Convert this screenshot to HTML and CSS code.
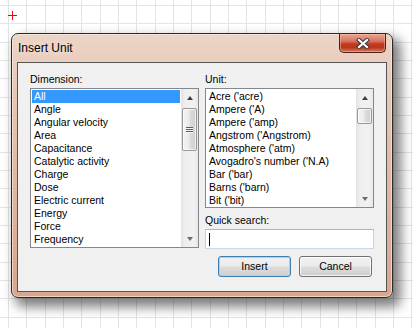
FILE: index.html
```html
<!DOCTYPE html>
<html>
<head>
<meta charset="utf-8">
<link rel="stylesheet" href="styles.css">
</head>
<body>
<div class="canvas">
  <div class="cross"></div>
  <div class="dialog">
    <div class="titlebar">
      <span class="title">Insert Unit</span>
      <div class="close">
        <svg width="14" height="11" viewBox="0 0 14 11">
          <path d="M3 2 L11 9 M11 2 L3 9" stroke="#3a3a3a" stroke-width="4.2" stroke-linecap="square" fill="none"/>
          <path d="M3 2 L11 9 M11 2 L3 9" stroke="#ffffff" stroke-width="2.2" stroke-linecap="square" fill="none"/>
        </svg>
      </div>
    </div>
    <div class="client">
      <div class="col">
        <div class="label">Dimension:</div>
        <div class="listbox tall">
          <div class="items">
            <div class="item sel">All</div>
            <div class="item">Angle</div>
            <div class="item">Angular velocity</div>
            <div class="item">Area</div>
            <div class="item">Capacitance</div>
            <div class="item">Catalytic activity</div>
            <div class="item">Charge</div>
            <div class="item">Dose</div>
            <div class="item">Electric current</div>
            <div class="item">Energy</div>
            <div class="item">Force</div>
            <div class="item">Frequency</div>
          </div>
          <div class="scrollbar">
            <div class="arrow"><span class="tri up"></span></div>
            <div class="track">
              <div class="thumb big"><span class="grip"></span><span class="grip"></span><span class="grip"></span></div>
            </div>
            <div class="arrow"><span class="tri down"></span></div>
          </div>
        </div>
      </div>
      <div class="col">
        <div class="label">Unit:</div>
        <div class="listbox short">
          <div class="items">
            <div class="item">Acre ('acre)</div>
            <div class="item">Ampere ('A)</div>
            <div class="item">Ampere ('amp)</div>
            <div class="item">Angstrom ('Angstrom)</div>
            <div class="item">Atmosphere ('atm)</div>
            <div class="item">Avogadro's number ('N.A)</div>
            <div class="item">Bar ('bar)</div>
            <div class="item">Barns ('barn)</div>
            <div class="item">Bit ('bit)</div>
          </div>
          <div class="scrollbar">
            <div class="arrow"><span class="tri up"></span></div>
            <div class="track">
              <div class="thumb small"></div>
            </div>
            <div class="arrow"><span class="tri down"></span></div>
          </div>
        </div>
        <div class="label search-label">Quick search:</div>
        <div class="textbox"><span class="caret"></span></div>
        <div class="buttons">
          <div class="btn default">Insert</div>
          <div class="btn">Cancel</div>
        </div>
      </div>
    </div>
  </div>
</div>
</body>
</html>
```

FILE: styles.css
```css
* { box-sizing: border-box; }
html, body { margin: 0; padding: 0; }
body {
  width: 413px;
  height: 328px;
  overflow: hidden;
  background-color: #ffffff;
  background-image:
    repeating-linear-gradient(to right, #e4e4e4 0, #e4e4e4 1px, transparent 1px, transparent 18.33px),
    repeating-linear-gradient(to bottom, #e4e4e4 0, #e4e4e4 1px, transparent 1px, transparent 18.33px);
  background-position: 8px 0, 0 5px;
  font-family: "Liberation Sans", Arial, sans-serif;
  font-size: 10.5px;
  color: #000;
}
.canvas {
  position: relative;
  width: 413px;
  height: 328px;
  padding: 33px 0 0 11px;
}
.cross {
  position: absolute;
  left: 8px;
  top: 11px;
  width: 9px;
  height: 9px;
  background:
    linear-gradient(#ff0000, #ff0000) 0 4px / 9px 1px no-repeat,
    linear-gradient(#ff0000, #ff0000) 4px 0 / 1px 9px no-repeat;
}
.dialog {
  width: 382px;
  height: 265px;
  border: 1px solid #2a2a2a;
  border-radius: 7px;
  padding: 0 5px 5px 5px;
  background: linear-gradient(to bottom, #ecd4c6 0%, #e5c3b0 30%, #dcb09a 75%, #d7a68e 100%);
  box-shadow: 6px 7px 12px 2px rgba(0,0,0,0.5), inset 0 0 0 1px rgba(255,240,232,0.6);
}
.titlebar {
  height: 28px;
  display: flex;
  justify-content: space-between;
  align-items: flex-start;
}
.title {
  font-size: 12px;
  line-height: 14px;
  margin-top: 7px;
  margin-left: 1px;
  color: #000;
  text-shadow: 0 0 6px rgba(255,255,255,0.8);
}
.close {
  width: 47px;
  height: 19px;
  margin-right: 1px;
  border: 1px solid #4d2018;
  border-top: none;
  border-radius: 0 0 5px 5px;
  background: linear-gradient(to bottom, #e8a592 0%, #d87560 40%, #c23c22 55%, #bb361c 75%, #d67c60 100%);
  box-shadow: inset 0 0 0 1px rgba(255,200,180,0.45);
  display: flex;
  align-items: center;
  justify-content: center;
}
.close svg { display: block; }
.client {
  width: 370px;
  height: 230px;
  border: 1px solid #555555;
  background: #f0f0f0;
  padding: 10px 0 0 12px;
  display: grid;
  grid-template-columns: 169px 169px;
  column-gap: 6px;
  align-items: start;
}
.col { display: flex; flex-direction: column; }
.label {
  line-height: 13px;
  height: 13px;
  margin-bottom: 2px;
  white-space: nowrap;
}
.listbox {
  border: 1px solid #828790;
  background: #fff;
  display: flex;
}
.listbox.tall { height: 160px; }
.listbox.short { height: 120px; }
.items {
  flex: 1;
  padding: 1px 1px 0 1px;
  overflow: hidden;
}
.item {
  height: 13px;
  line-height: 13px;
  padding-left: 2px;
  white-space: nowrap;
}
.item.sel { background: #3399ff; color: #fff; }
.scrollbar {
  width: 17px;
  display: flex;
  flex-direction: column;
  background: linear-gradient(to right, #e3e3e3 0%, #efefef 25%, #f1f1f1 75%, #e8e8e8 100%);
}
.arrow {
  height: 17px;
  display: flex;
  align-items: center;
  justify-content: center;
}
.tri {
  width: 0;
  height: 0;
  border-left: 3.5px solid transparent;
  border-right: 3.5px solid transparent;
}
.tri.up { border-bottom: 4px solid #3f3f3f; }
.tri.down { border-top: 4px solid #6d6d6d; }
.track { flex: 1; padding-top: 2px; }
.thumb {
  width: 15px;
  margin-left: 1px;
  border: 1px solid #979797;
  border-radius: 2px;
  background: linear-gradient(to right, #f4f4f4 0%, #ebebeb 45%, #dcdcdc 55%, #cfcfcf 100%);
  box-shadow: inset 0 0 0 1px rgba(255,255,255,0.7);
  display: flex;
  flex-direction: column;
  align-items: center;
  justify-content: center;
  gap: 1px;
}
.thumb.big { height: 43px; }
.thumb.small { height: 16px; }
.grip {
  width: 7px;
  height: 1px;
  background: #5c5c5c;
  box-shadow: 0 1px 0 #f8f8f8;
}
.search-label { margin-top: 6px; }
.textbox {
  height: 20px;
  border: 1px solid;
  border-color: #9fb9d4 #bcd3e8 #c5daed #bcd3e8;
  background: #fff;
  display: flex;
  align-items: center;
}
.caret {
  width: 1px;
  height: 13px;
  background: #000;
  margin-left: 3px;
}
.buttons {
  margin-top: 7px;
  display: flex;
  gap: 8px;
  padding-left: 13px;
}
.btn {
  width: 73px;
  height: 21px;
  border: 1px solid #707070;
  border-radius: 3px;
  background: linear-gradient(to bottom, #f2f2f2 0%, #ebebeb 48%, #dddddd 52%, #cfcfcf 100%);
  box-shadow: inset 0 0 0 1px rgba(255,255,255,0.75);
  display: flex;
  align-items: center;
  justify-content: center;
  line-height: 13px;
}
.btn.default {
  border-color: #3c7fb1;
  box-shadow: inset 0 0 0 1px #9fd6f3;
}
```
